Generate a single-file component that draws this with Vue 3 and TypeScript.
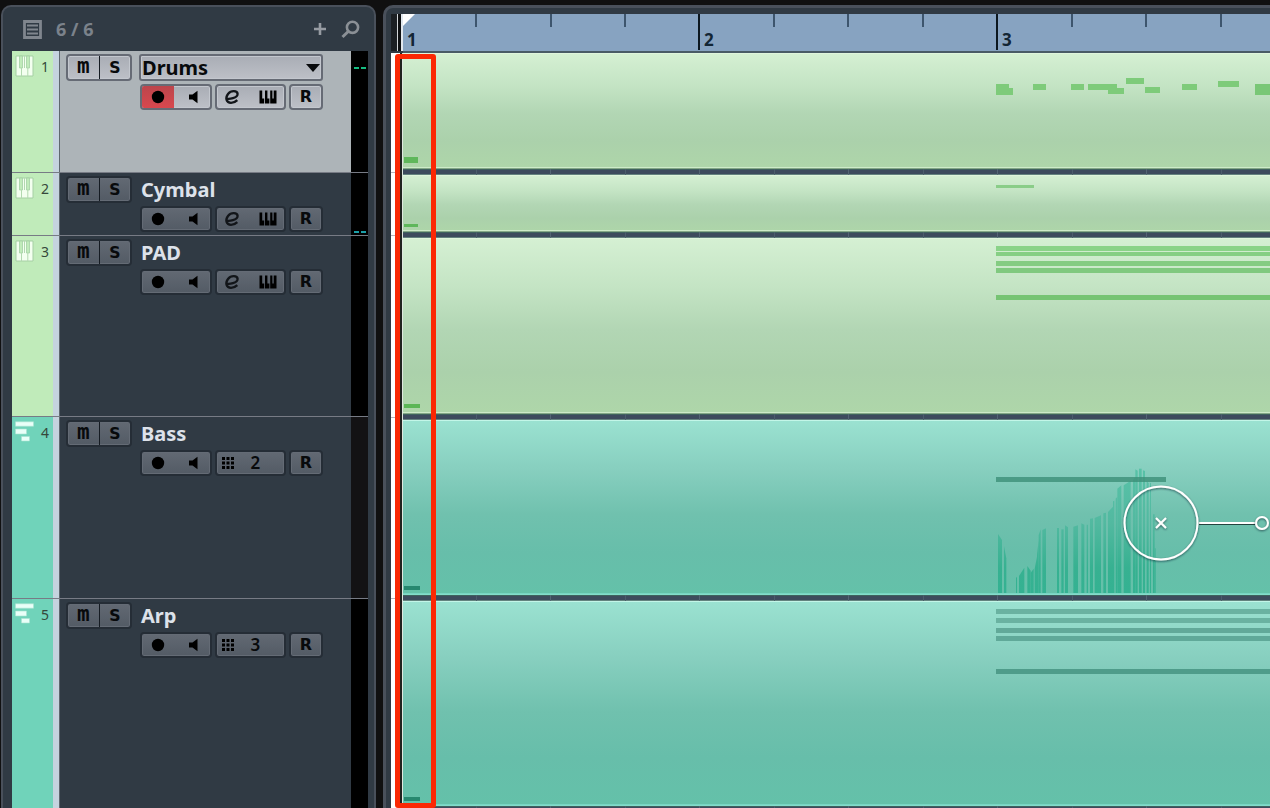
<script setup lang="ts">
import { ref } from 'vue'

type Kind = 'instrument' | 'midi'
interface Note { x: number; y: number; w: number | string; h: number; tone: string }
interface Track {
  id: number
  name: string
  kind: Kind
  selected: boolean
  channel: number
  rowHeight: number
  clipHeight: number
  meter: string
  notes: Note[]
}

const start = 593
const green = '#7ecb7a'
const teal = '#6ab2a1'

const tracks: Track[] = [
  {
    id: 1, name: 'Drums', kind: 'instrument', selected: true, channel: 0, rowHeight: 122, clipHeight: 116, meter: 'high',
    notes: [
      { x: 1, y: 104, w: 14, h: 6, tone: '#5fb75b' },
      { x: start, y: 31, w: 13, h: 6, tone: green },
      { x: start, y: 35, w: 17, h: 7, tone: green },
      { x: 630, y: 31, w: 13, h: 6, tone: green },
      { x: 668, y: 31, w: 13, h: 6, tone: green },
      { x: 685, y: 31, w: 29, h: 6, tone: green },
      { x: 705, y: 35, w: 16, h: 6, tone: green },
      { x: 723, y: 25, w: 18, h: 6, tone: green },
      { x: 742, y: 34, w: 15, h: 6, tone: green },
      { x: 779, y: 31, w: 15, h: 6, tone: green },
      { x: 815, y: 28, w: 21, h: 6, tone: green },
      { x: 852, y: 31, w: 40, h: 11, tone: '#79c776' },
    ],
  },
  {
    id: 2, name: 'Cymbal', kind: 'instrument', selected: false, channel: 0, rowHeight: 63, clipHeight: 57, meter: 'low',
    notes: [
      { x: 1, y: 49, w: 14, h: 3, tone: '#5fb75b' },
      { x: start, y: 10, w: 38, h: 3, tone: '#8acd88' },
    ],
  },
  {
    id: 3, name: 'PAD', kind: 'instrument', selected: false, channel: 0, rowHeight: 181, clipHeight: 176, meter: '',
    notes: [
      { x: 1, y: 166, w: 16, h: 4, tone: '#5cb656' },
      { x: start, y: 8, w: '100%', h: 5, tone: '#8ad388' },
      { x: start, y: 14, w: '100%', h: 4, tone: '#86cf84' },
      { x: start, y: 23, w: '100%', h: 5, tone: '#84cc82' },
      { x: start, y: 30, w: '100%', h: 5, tone: '#80c97f' },
      { x: start, y: 57, w: '100%', h: 5, tone: '#76c473' },
    ],
  },
  {
    id: 4, name: 'Bass', kind: 'midi', selected: false, channel: 2, rowHeight: 182, clipHeight: 175, meter: 'idle',
    notes: [{ x: 1, y: 166, w: 16, h: 4, tone: '#27886f' }],
  },
  {
    id: 5, name: 'Arp', kind: 'midi', selected: false, channel: 3, rowHeight: 209, clipHeight: 205, meter: '',
    notes: [
      { x: 1, y: 196, w: 16, h: 4, tone: '#27886f' },
      { x: start, y: 8, w: '100%', h: 5, tone: teal },
      { x: start, y: 17, w: '100%', h: 5, tone: teal },
      { x: start, y: 27, w: '100%', h: 5, tone: '#62a999' },
      { x: start, y: 35, w: '100%', h: 5, tone: '#60a999' },
      { x: start, y: 68, w: '100%', h: 5, tone: '#4f9c8a' },
    ],
  },
]

// Controller values of the bass part: left, right, top at left, top at right.
const sweep: number[][] = [
  [114, 126, 402, 420], [132, 139, 438, 475], [168, 171, 533, 530], [177, 193, 528, 503], [202, 212, 498, 512],
  [212, 221, 518, 506], [224, 231, 506, 470], [231, 236, 464, 420], [236, 242, 405, 388], [247, 258, 390, 385],
  [291, 297, 384, 384], [304, 311, 388, 388], [315, 324, 376, 382], [340, 354, 380, 376], [364, 373, 370, 374],
  [380, 384, 374, 374], [390, 399, 356, 355], [404, 423, 354, 346], [430, 438, 340, 338], [444, 461, 336, 318],
  [459, 463, 304, 302], [467, 472, 296, 290], [472, 484, 266, 256], [491, 512, 256, 242], [519, 526, 240, 232],
  [526, 533, 208, 212], [537, 545, 206, 206], [549, 555, 211, 213], [560, 566, 242, 250], [570, 573, 248, 250],
  [579, 584, 343, 343], [584, 587, 445, 445],
]

const bars = [1, 2, 3]
const current = ref('Drums')
</script>

<template>
  <main class="project">
    <section class="track-panel" aria-label="Track list">
      <header class="list-head">
        <button class="plain" aria-label="Track visibility">
          <svg width="19" height="19" viewBox="0 0 19 19"><path d="M1.500 1.500h16v16h-16z" fill="none" stroke="#80868e" stroke-width="2.8" /><path d="M4 5.500h11M4 9.500h11M4 13.500h11" stroke="#80868e" stroke-width="2.2" /></svg>
        </button>
        <span class="count">6 / 6</span>
        <button class="plain add" aria-label="Add track">
          <svg width="14" height="14" viewBox="0 0 14 14"><path d="M7 1v12M1 7h12" stroke="#969ba2" stroke-width="2.6" /></svg>
        </button>
        <button class="plain" aria-label="Find track">
          <svg width="19" height="19" viewBox="0 0 19 19" fill="none" stroke="#8b9096"><circle cx="11.5" cy="7.3" r="5.6" stroke-width="2.6" /><path d="M7.200 11.500 1.500 17" stroke-width="3" /></svg>
        </button>
      </header>

      <article v-for="t in tracks" :key="t.id" class="track" :class="[t.kind, { selected: t.selected }]" :style="{ '--h': t.rowHeight + 'px' }">
        <div class="strip">
          <svg v-if="t.kind === 'instrument'" width="19" height="22" viewBox="0 0 19 22">
            <path d="M1 1h17v20H1z" fill="#f3fff0" stroke="#a5cfa4" />
            <path d="M4.5 1h3v12h-3zM11.5 1h3v12h-3z" fill="#c0ebba" stroke="#a5cfa4" stroke-width=".8" />
            <path d="M6.5 13v8M12.800 13v8M9.500 1v12" stroke="#b2d9b0" stroke-width="1" />
          </svg>
          <svg v-else width="19" height="22" viewBox="0 0 19 22">
            <path d="M.5 .8h18v4.400H.5zM.5 8h11v5H.5zM6.500 15.500h8v4.500h-8z" fill="#e9fff8" stroke="#a9e2d2" stroke-width=".6" />
          </svg>
          <span class="num">{{ t.id }}</span>
        </div>
        <div class="controls">
          <div class="group mute-solo">
            <button class="letter" :aria-label="'Mute ' + t.name">m</button>
            <button class="letter" :aria-label="'Solo ' + t.name">s</button>
          </div>
          <div class="main">
            <div v-if="t.selected" class="picker">
              <select v-model="current" aria-label="Track name">
                <option v-for="o in tracks" :key="o.id">{{ o.name }}</option>
              </select>
              <svg class="arrow" width="14" height="8" viewBox="0 0 14 8"><path d="M0 0h14L7 8z" fill="#080a0c" /></svg>
            </div>
            <span v-else class="name">{{ t.name }}</span>
            <div class="tools">
              <div class="group pair">
                <button :class="{ armed: t.selected }" aria-label="Record enable">
                  <svg width="14" height="14" viewBox="0 0 14 14"><circle cx="7" cy="7" r="6.2" /></svg>
                </button>
                <button class="monitor" aria-label="Monitor">
                  <svg width="9" height="14" viewBox="0 0 9 14"><path d="M0 4.500h3.500L8.500 .8v12.400L3.500 9.500H0z" /></svg>
                </button>
              </div>
              <div class="group pair">
                <template v-if="t.kind === 'instrument'">
                  <button aria-label="Edit instrument">
                    <svg width="16" height="14" viewBox="0 0 16 14" fill="none"><path d="M1.500 8.300C5 9.600 13.800 8 13.600 3.900 13.300.4 7 .2 4 4 1 8 2.200 12.800 7 12.800c2.600 0 4.600-1 6.300-2.700" stroke="#121519" stroke-width="2.3" /></svg>
                  </button>
                  <button class="monitor" aria-label="Open keyboard">
                    <svg width="18" height="14" viewBox="0 0 18 14"><path d="M.5 .5h2.700v8h2v5H.5zM6 8.500V.5h2.400v8h2v5H6zM11.200 8.500V.5h2.200v8h1.300v-8h2.800v13h-6.300z" /></svg>
                  </button>
                </template>
                <button v-else class="channel" aria-label="MIDI channel">
                  <svg width="14" height="14" viewBox="0 0 14 14"><path d="M1 1h3v3H1zM5.5 1h3v3h-3zM10 1h3v3h-3zM1 5.5h3v3H1zM5.5 5.5h3v3h-3zM10 5.5h3v3h-3zM1 10h3v3H1zM5.5 10h3v3h-3zM10 10h3v3h-3z" /></svg>
                  <span>{{ t.channel }}</span>
                </button>
              </div>
              <div class="group"><button class="read" aria-label="Read automation">R</button></div>
            </div>
          </div>
        </div>
        <div class="meter" :class="t.meter"><i></i><i></i></div>
      </article>
    </section>

    <section class="timeline" aria-label="Arrangement">
      <div class="ruler">
        <div class="ruler-gutter"></div>
        <div class="bars">
          <svg class="locator" width="12" height="12" viewBox="0 0 12 12"><path d="M0 0h12L0 12z" fill="#fff" /></svg>
          <div v-for="b in bars" :key="b" class="bar"><i></i><i></i><i></i><i></i><span>{{ b }}</span></div>
        </div>
      </div>
      <template v-for="t in tracks" :key="t.id">
        <div class="lane" :class="t.kind" :style="{ '--h': t.clipHeight + 'px' }">
          <div class="gutter"></div>
          <div class="clip">
            <svg width="100%" height="100%">
              <defs v-if="t.id === 4">
                <linearGradient id="sweep-fill" gradientUnits="userSpaceOnUse" x1="0" y1="200" x2="0" y2="579">
                  <stop offset="0" stop-color="#58c2a8" /><stop offset=".45" stop-color="#52b9a0" /><stop offset=".8" stop-color="#37b191" /><stop offset="1" stop-color="#34b292" />
                </linearGradient>
                <filter id="soft" x="-20%" y="-50%" width="140%" height="200%"><feDropShadow dx="0" dy="1" stdDeviation="1" flood-color="#123" flood-opacity=".7" /></filter>
              </defs>
              <rect v-for="(n, i) in t.notes" :key="i" :x="n.x" :y="n.y" :width="n.w" :height="n.h" :fill="n.tone" />
              <template v-if="t.id === 4">
                <svg x="593" y="46" width="160" height="127" viewBox="108 198 480 381">
                  <polygon v-for="(s, i) in sweep" :key="i" :points="`${s[0]},579 ${s[0]},${s[2]} ${s[1]},${s[3]} ${s[1]},579`" fill="url(#sweep-fill)" />
                </svg>
                <rect x="593" y="57" width="170" height="5" fill="#3c8f78" fill-opacity=".8" />
                <g stroke="#fff" fill="none" stroke-width="2">
                  <path d="M796 104.500H852" stroke="#24443f" stroke-width="1" />
                  <path d="M796 103H852" />
                  <g filter="url(#soft)">
                    <circle cx="758" cy="103" r="36.5" />
                    <path d="m753 98 10 10m0-10-10 10" />
                    <circle cx="859" cy="103" r="6" />
                  </g>
                </g>
              </template>
            </svg>
          </div>
        </div>
        <div class="divider"><div class="gutter"></div><div class="gap"></div></div>
      </template>
      <div class="highlight"></div>
    </section>
  </main>
</template>

<style>
html, body { background: #101011; }
body { margin: 0; }
</style>

<style scoped>
* { box-sizing: border-box; }
.project {
  display: flex;
  gap: 7px;
  min-height: 100vh;
  padding: 5px 0 0 1px;
  overflow: hidden;
  background: #101011;
  font-family: "Noto Sans", "Open Sans", sans-serif;
}
button { border: 0; padding: 0; background: none; color: #080a0c; font: inherit; display: flex; align-items: center; justify-content: center; }
svg { display: block; flex: none; }

.track-panel {
  flex: none;
  width: 375px;
  display: flex;
  flex-direction: column;
  padding: 0 6px 0 9px;
  border: 2px solid #49505b;
  border-bottom: 0;
  border-radius: 10px 10px 0 0;
  background: #303a44;
}
.list-head { display: flex; align-items: center; height: 44px; padding: 0 8px 0 11px; gap: 14px; }
.count { color: #7b828b; font-size: 18px; font-weight: 700; line-height: 24px; }
.add { margin-left: auto; }

.track { display: flex; height: var(--h); flex: none; border-bottom: 1px solid #777b85; background: #303a44; }
.track:last-child { flex: 1 0 var(--h); border-bottom: 0; }
.strip {
  width: 48px;
  flex: none;
  display: flex;
  gap: 7px;
  padding: 4px 0 0 3px;
  background: #c0ebba;
  border-right: 1px solid #5f6770;
  box-shadow: inset -6px 0 #c5d3df;
}
.midi .strip { background: #70d3ba; }
.num { color: #35483b; font-size: 14px; line-height: 24px; }
.controls { flex: 1; display: flex; align-items: flex-start; gap: 7px; padding: 3px 0 0 6px; min-width: 0; }
.selected .controls { background: #adb4b8; }
.group {
  display: flex;
  height: 26px;
  border: 2px solid #252d36;
  border-radius: 4px;
  background: linear-gradient(#626973, #535b65);
  box-shadow: inset 0 0 0 1px #646b75;
}
.selected .group, .picker {
  border-color: #666b75;
  background: linear-gradient(#a9adb5, #bdc0c7);
  box-shadow: inset 0 0 0 1px #c3c7ce;
}
.mute-solo { width: 66px; height: 27px; }
.mute-solo button { flex: 1; }
.mute-solo button + button { border-left: 1px solid #151b22; }
.letter { align-items: flex-end; font: bold 21px/25px "DejaVu Sans Mono", monospace; }
.main { display: flex; flex-direction: column; gap: 3px; width: 184px; }
.name { height: 27px; padding-left: 2px; color: #dde2ea; font-size: 20px; font-weight: 700; line-height: 28px; }
.picker { position: relative; height: 27px; border: 2px solid #666b75; border-radius: 3px; }
.picker select {
  width: 100%;
  height: 100%;
  padding: 0 0 0 1px;
  border: 0;
  appearance: none;
  background: none;
  color: #080a0c;
  font: 700 20px/24px "Noto Sans", sans-serif;
}
.arrow { position: absolute; right: 1px; top: 8px; pointer-events: none; }
.tools { display: flex; gap: 3px; padding-left: 1px; }
.pair { width: 72px; }
.pair button { flex: 1; }
.pair .monitor { padding-left: 4px; }
.pair .channel { justify-content: flex-start; gap: 16px; padding-left: 4px; font-size: 17px; font-weight: 600; line-height: 22px; }
.armed { background: linear-gradient(#bc454c, #d8484e); border-radius: 2px 0 0 2px; }
.read { width: 30px; font: bold 16px/22px "DejaVu Sans", sans-serif; }
.meter { width: 17px; flex: none; display: flex; gap: 2px; padding: 16px 2px 0 3px; background: #000; }
.meter.low { align-items: flex-end; padding-top: 0; padding-bottom: 2px; }
.meter.idle { background: #131214; }
.meter i { width: 5px; height: 2px; }
.meter.high i { background: #15bd82; }
.meter.low i { background: #1ca0a8; }

.timeline {
  position: relative;
  flex: 1;
  min-width: 0;
  display: flex;
  flex-direction: column;
  padding: 6px 0 0 5px;
  border: 3px solid #49505b;
  border-right: 0;
  border-bottom: 0;
  border-radius: 10px 0 0 0;
  background: #303a44;
}
.ruler { display: flex; height: 39px; flex: none; }
.ruler-gutter { width: 12px; height: 37px; background: linear-gradient(90deg, #1b1f23 6px, #d3d6d9 6px, #d3d6d9 7px, #0e1012 7px, #0e1012 10px, #e2e8ee 10px); }
.bars { position: relative; flex: 1; min-width: 0; display: flex; overflow: hidden; background: #87a3c1; border-bottom: 2px solid #495b66; }
.locator { position: absolute; left: 0; top: 0; }
.bar { position: relative; flex: none; width: 298px; display: grid; grid-template-columns: repeat(4, 1fr); align-items: start; }
.bar:nth-child(2) { width: 295px; grid-template-columns: 72px 75px 74px 74px; }
.bar:nth-child(2) i:first-child { border-color: transparent; }
.bar:nth-child(2) span { left: 4px; }
.bar i { height: 13px; border-left: 2px solid #3d556d; }
.bar i:first-child { height: 36px; border-color: #0c171f; }
.bar span { position: absolute; left: 6px; top: 15px; color: #132635; font-size: 17px; font-weight: 700; line-height: 22px; }
.lane { display: flex; flex: none; height: var(--h); }
.lane:nth-last-child(3) { flex: 1 0 var(--h); }
.gutter { flex: none; width: 12px; background: linear-gradient(90deg, #fff 9px, #20231f 9px, #20231f 11px, #dfe9e0 11px); }
.clip {
  flex: 1;
  min-width: 0;
  overflow: hidden;
  background: linear-gradient(#d5f0d3, #c4e4c4 28%, #b2d6b4 52%, #abd1ab 76%, #aed6a9);
  box-shadow: inset 0 1px #e0f5dc, inset 0 -1px #83a786, inset 0 -2px #cdebc8;
}
.midi .clip {
  background: linear-gradient(#9be2d1, #87cfbf 28%, #70c1ae 54%, #67beaa 76%, #64c1a9);
  box-shadow: inset 0 1px #c3f6e8, inset 0 -1px #83dcca, inset 0 -2px #78d5c2;
}
.divider { display: flex; flex: none; height: 6px; }
.divider .gap {
  flex: 1;
  background:
    linear-gradient(90deg, #536573 1px, transparent 1px, transparent 75px, #4b5d6b 75px, #4b5d6b 76px, transparent 76px) -2px 0 / 149px 100%,
    linear-gradient(#3f625e 1px, #3d4b5d 1px, #3d4b5d 5px, #63837e 5px);
}
.divider .gutter { background: linear-gradient(90deg, transparent 9px, #20231f 9px, #20231f 11px, #dfe9e0 11px), linear-gradient(#fff 3px, #b7b4bd 3px, #b7b4bd 4px, #fff 4px); }
.divider:nth-last-child(2) { height: 2px; }
.highlight { position: absolute; left: 9px; top: 46px; bottom: 0; width: 41px; border: 5px solid #fb2804; border-radius: 3px; }
</style>
